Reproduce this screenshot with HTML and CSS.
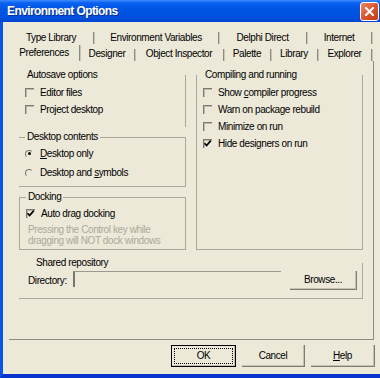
FILE: index.html
```html
<!DOCTYPE html>
<html lang="en">
<head>
  <meta charset="UTF-8">
  <title>Environment Options</title>
  <link rel="stylesheet" href="styles.css">
</head>
<body>
  <div class="window">
    <div class="titlebar">
      <span class="title">Environment Options</span>
      <span class="close">
        <svg width="9" height="9" viewBox="0 0 9 9"><path d="M1 1L8 8M8 1L1 8" stroke="#fff" stroke-width="2" stroke-linecap="square"/></svg>
      </span>
    </div>

    <div class="frame">
      <div class="tabrow back">
        <span class="tab">Type Library</span>
        <span class="tab">Environment Variables</span>
        <span class="tab">Delphi Direct</span>
        <span class="tab">Internet</span>
      </div>
      <div class="tabrow front">
        <span class="tab active">Preferences</span>
        <span class="tab">Designer</span>
        <span class="tab">Object Inspector</span>
        <span class="tab">Palette</span>
        <span class="tab">Library</span>
        <span class="tab">Explorer</span>
      </div>

      <div class="sheet">
        <div class="columns">
          <div class="col">
            <fieldset class="group only-right autosave">
              <legend>Autosave options</legend>
              <div class="opt"><span class="box"></span><span>Editor files</span></div>
              <div class="opt"><span class="box"></span><span>Project desktop</span></div>
            </fieldset>

            <fieldset class="group no-left desktop">
              <legend>Desktop contents</legend>
              <div class="opt radio-row"><span class="radio on"></span><span><u>D</u>esktop only</span></div>
              <div class="opt radio-row"><span class="radio"></span><span>Desktop and <u>s</u>ymbols</span></div>
            </fieldset>

            <fieldset class="group docking">
              <legend>Docking</legend>
              <div class="opt"><span class="box checked"><svg width="9" height="9" viewBox="0 0 9 9"><path d="M1.5 4.2L3.6 6.5L7.8 1.6" fill="none" stroke="#000" stroke-width="1.7"/></svg></span><span>Auto drag docking</span></div>
              <p class="note">Pressing the Control key while<br>dragging will NOT dock windows</p>
            </fieldset>
          </div>

          <fieldset class="group no-top compile">
            <legend>Compiling and running</legend>
            <div class="opt"><span class="box"></span><span>Show <u>c</u>ompiler progress</span></div>
            <div class="opt"><span class="box"></span><span>Warn on package rebuild</span></div>
            <div class="opt"><span class="box"></span><span>Minimize on run</span></div>
            <div class="opt"><span class="box checked"><svg width="9" height="9" viewBox="0 0 9 9"><path d="M1.5 4.2L3.6 6.5L7.8 1.6" fill="none" stroke="#000" stroke-width="1.7"/></svg></span><span>Hide designers on run</span></div>
          </fieldset>
        </div>

        <fieldset class="group only-right-bottom shared">
          <legend>Shared repository</legend>
          <div class="dir-row">
            <span class="dir-label">Directory:</span>
            <span class="edit"></span>
            <span class="btn browse">Browse...</span>
          </div>
        </fieldset>
      </div>

      <div class="buttons">
        <span class="btn default"><span class="focus">OK</span></span>
        <span class="btn cancel">Cancel</span>
        <span class="btn help"><span><u>H</u>elp</span></span>
      </div>
    </div>
  </div>
</body>
</html>
```

FILE: styles.css
```css
* {
  box-sizing: border-box;
}
html, body {
  margin: 0;
}
body {
  width: 380px;
  height: 378px;
  overflow: hidden;
  background: #ece9d8;
  color: #000;
  font: 10px/12px "Liberation Sans", Arial, sans-serif;
  letter-spacing: -0.4px;
}
u {
  text-decoration: underline;
}
.window {
  width: 380px;
  height: 378px;
  display: flex;
  flex-direction: column;
}
.titlebar {
  height: 22px;
  display: flex;
  align-items: center;
  justify-content: space-between;
  padding: 0 1px 0 7px;
  background: linear-gradient(#3d8dff 0, #0a60f0 3px, #0055e5 9px, #0050de 17px, #0046d2 22px);
}
.title {
  color: #fff;
  font-weight: bold;
  font-size: 12px;
  letter-spacing: -0.6px;
  text-shadow: 1px 1px #0b2d8f;
}
.close {
  width: 19px;
  height: 19px;
  display: flex;
  align-items: center;
  justify-content: center;
  border: 1px solid #fff;
  border-radius: 3px;
  background: linear-gradient(135deg, #ec8566, #d9532e 55%, #c13c17);
}
.frame {
  flex: 1;
  border-left: 3px solid #0a55e8;
  border-bottom: 4px solid #0734cc;
  padding: 8px 0 0 6px;
}

/* tabs */
.tabrow {
  display: grid;
  height: 15px;
}
.tabrow.back {
  grid-template-columns: 85px 125px 88px 65px;
}
.tabrow.front {
  grid-template-columns: 71px 55px 89px 47px 47px 54px;
  height: 16px;
  align-items: end;
}
.tab {
  height: 12px;
  line-height: 12px;
  text-align: center;
  border-right: 1px solid #8d8a7e;
  box-shadow: 1px 0 #c8c5b6;
}
.tabrow.back .tab {
  margin-top: 2px;
}
.tabrow.front .tab {
  line-height: 9px;
}
.tabrow.front .tab.active {
  height: 16px;
  line-height: 16px;
}

/* page */
.sheet {
  width: 365px;
  height: 279px;
  padding: 8px 10px 0;
  border-right: 1px solid #8f8d80;
  border-bottom: 1px solid #8f8d80;
}
.columns {
  display: grid;
  grid-template-columns: 167px 167px;
  column-gap: 10px;
}
.col {
  display: flex;
  flex-direction: column;
}
.group {
  margin: 0;
  padding: 0;
  min-width: 0;
  border: 1px solid #aca899;
}
.group legend {
  padding: 0 2px;
  margin-left: 6px;
  line-height: 12px;
}
.only-right {
  border-top-width: 0;
  border-left-width: 0;
  border-bottom-width: 0;
}
.no-left {
  border-left-width: 0;
}
.no-top {
  border-top-width: 0;
}
.only-right-bottom {
  border-top-width: 0;
  border-left-width: 0;
}
.autosave {
  padding-top: 3px;
  padding-bottom: 9px;
}
.compile {
  padding-top: 3px;
}
.desktop {
  margin-top: 4px;
  padding-top: 1px;
  padding-bottom: 4px;
}
.docking {
  margin-top: 4px;
  padding-top: 2px;
  padding-bottom: 3px;
}
.shared {
  margin-top: 7px;
  padding: 2px 0 8px 9px;
}

.opt {
  display: flex;
  align-items: center;
  height: 17px;
  padding-left: 6px;
}
.radio-row {
  height: 19px;
}
.box {
  width: 9px;
  height: 9px;
  margin-right: 6px;
  flex-shrink: 0;
  border-top: 1px solid #7b7a72;
  border-left: 1px solid #7b7a72;
  box-shadow: inset 1px 1px #bdbaac;
}
.box svg {
  display: block;
  margin: -1px 0 0 -1px;
}
.radio {
  width: 8px;
  height: 8px;
  margin-right: 7px;
  flex-shrink: 0;
  border-radius: 50%;
  border: 1px solid transparent;
  border-top-color: #7b7a72;
  border-left-color: #7b7a72;
  display: flex;
  align-items: center;
  justify-content: center;
}
.radio.on::after {
  content: "";
  width: 3px;
  height: 3px;
  border-radius: 50%;
  background: #000;
}
.note {
  margin: 2px 0 0;
  padding-left: 8px;
  line-height: 11px;
  color: #aca899;
}

/* shared repository */
.dir-row {
  display: flex;
  align-items: center;
  height: 19px;
}
.dir-label {
  width: 45px;
}
.edit {
  width: 208px;
  height: 16px;
  align-self: flex-start;
  border-top: 1px solid #9c9a90;
  border-left: 2px solid #77766e;
}
.btn {
  display: flex;
  align-items: center;
  justify-content: center;
  height: 22px;
  border-right: 1px solid #7f7d72;
  border-bottom: 1px solid #7f7d72;
  box-shadow: inset -1px -1px #c5c2b2;
}
.browse {
  width: 67px;
  height: 19px;
  margin-left: 9px;
}

/* dialog buttons */
.buttons {
  display: flex;
  gap: 6px;
  margin: 5px 0 0 162px;
}
.default {
  width: 65px;
  padding: 2px;
  border: 1px solid #000;
}
.focus {
  flex: 1;
  align-self: stretch;
  display: flex;
  align-items: center;
  justify-content: center;
  border: 1px dotted #000;
}
.cancel {
  width: 63px;
}
.help {
  width: 64px;
}
```
